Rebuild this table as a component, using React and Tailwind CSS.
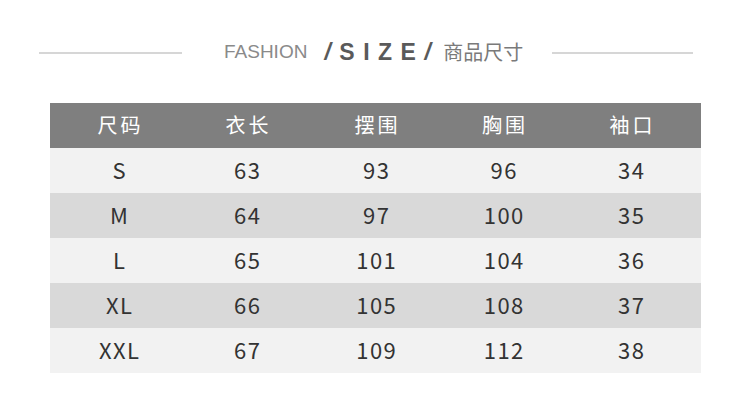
import React from "react";

const headers = ["尺码", "衣长", "摆围", "胸围", "袖口"];
const rows = [
  ["S", "63", "93", "96", "34"],
  ["M", "64", "97", "100", "35"],
  ["L", "65", "101", "104", "36"],
  ["XL", "66", "105", "108", "37"],
  ["XXL", "67", "109", "112", "38"],
];

const App = () => {
  return (
    <div
      className="w-[750px] h-[404px] bg-white overflow-hidden"
      style={{ fontFamily: '"Noto Sans CJK SC", "Noto Sans", sans-serif' }}
    >
      {/* title */}
      <div className="flex items-center h-[40px] mt-[32px]">
        <div className="ml-[39px] w-[143px] h-[2px] bg-[#d6d6d6] mt-[2px]" />
        <div className="flex items-center ml-[42px]">
          <span
            className="text-[19px] text-[#8a8a8a] font-light"
            style={{ fontFamily: '"Liberation Sans", sans-serif' }}
          >
            FASHION
          </span>
          <span
            className="ml-[17px] text-[23px] font-bold text-[#5a5a5a] tracking-[8.5px]"
            style={{ fontFamily: '"Liberation Sans", sans-serif' }}
          >
            <span className="italic">/</span>SIZE<span className="italic">/</span>
          </span>
          <span className="ml-[4px] text-[20px] text-[#7a7a7a]">商品尺寸</span>
        </div>
        <div className="ml-auto mr-[57px] w-[141px] h-[2px] bg-[#d6d6d6] mt-[2px]" />
      </div>

      {/* table */}
      <div className="mx-[50px] mt-[31px] w-[651px]">
        <div className="grid grid-cols-[138px_118px_140px_115px_140px] h-[45px] bg-[#7f7f7f] text-white text-[20px] items-center">
          {headers.map((h) => (
            <div key={h} className="text-center tracking-[3px] pl-[3px] pb-[1px]">
              {h}
            </div>
          ))}
        </div>
        {rows.map((r, i) => (
          <div
            key={r[0]}
            className={`grid grid-cols-[138px_118px_140px_115px_140px] h-[45px] items-center text-[22px] text-[#333333] tracking-[1.5px] ${
              i % 2 === 0 ? "bg-[#f2f2f2]" : "bg-[#d9d9d9]"
            }`}
          >
            {r.map((c, j) => (
              <div key={j} className="text-center pl-[1.5px] pb-[3px]">
                {c}
              </div>
            ))}
          </div>
        ))}
      </div>
    </div>
  );
};

export default App;
